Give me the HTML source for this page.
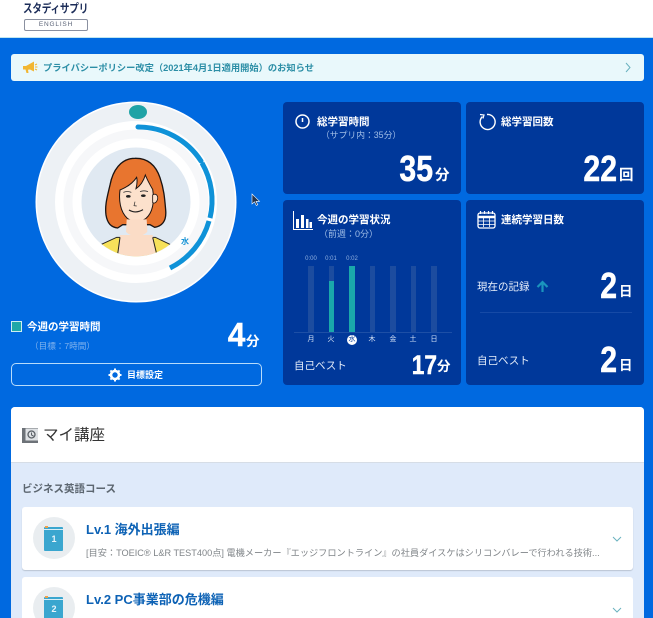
<!DOCTYPE html>
<html lang="ja"><head><meta charset="utf-8"><title>スタディサプリ ENGLISH</title>
<style>
*{margin:0;padding:0;box-sizing:border-box}
html,body{width:653px;height:618px;overflow:hidden;background:#0069e0}
body{font-family:"Liberation Sans","Noto Sans CJK JP",sans-serif;position:relative}
#w{position:absolute;left:0;top:0;width:653px;height:618px;overflow:hidden;filter:blur(.35px)}
.a{position:absolute;white-space:nowrap}
.t{line-height:14px;height:14px}
.b{font-weight:700}
.c{position:absolute;background:#00389a;border-radius:4px}
.n{position:absolute;font-weight:700;color:#fff;white-space:nowrap;transform-origin:100% 100%;transform:scaleX(.84);text-align:right;line-height:1;-webkit-text-stroke:.5px #fff}
.w{color:#fff}
.s{color:#9fbde6}
.bar{position:absolute;top:266px;width:5.5px;height:66px;background:#1c4c9f}
.bf{position:absolute;width:5.5px;background:#1aa8ab;bottom:286px}
.d{position:absolute;top:334px;width:14px;text-align:center;font-size:7px;line-height:12px;color:#d5e2f5}
.v{position:absolute;top:255px;width:20px;text-align:center;font-size:6px;line-height:8px;color:#8fb0e0}
</style></head><body><div id="w">

<div class="a" style="left:0;top:0;width:653px;height:38px;background:#fff;border-bottom:1px solid #bfe6f0"></div>
<div class="a b" style="left:23px;top:3px;font-size:9.6px;line-height:14px;color:#1b2c58;letter-spacing:-.2px;transform:scaleY(1.25);transform-origin:0 50%">スタディサプリ</div>
<div class="a" style="left:24px;top:19px;width:64px;height:12px;border:1px solid #8a90a0;border-radius:2px;text-align:center;font-size:6.5px;line-height:10px;letter-spacing:.8px;color:#5c6478">ENGLISH</div>

<div class="a" style="left:11px;top:54px;width:633px;height:27px;background:#e9f8fb;border-radius:3px"></div>
<svg class="a" style="left:22px;top:60px" width="16" height="14" viewBox="0 0 16 14"><path d="M1 6h3l8-4.500v10L8 9.500 6 9.800 6.500 13H4.500L3.500 9.500H1z" fill="#f2b632"/><path d="M13 5l2-1M13 7h2.500M13 9l2 1" stroke="#f2b632" stroke-width="1"/></svg>
<div class="a b t" id="nt" style="left:43px;top:61px;font-size:9.25px;color:#2b8ea6">プライバシーポリシー改定（2021年4月1日適用開始）のお知らせ</div>
<svg class="a" style="left:624px;top:62px" width="8" height="11" viewBox="0 0 8 11"><path d="M2 1l4 4.500L2 10" fill="none" stroke="#6ab2bf" stroke-width="1"/></svg>

<svg class="a" style="left:30px;top:96px" width="214" height="214" viewBox="0 0 214 214">
<circle cx="106" cy="106" r="100.500" fill="#fff"/>
<circle cx="106" cy="106" r="90" fill="none" stroke="#edf1f5" stroke-width="18"/>
<circle cx="106" cy="106" r="68" fill="none" stroke="#f6f7f9" stroke-width="9"/>
<ellipse cx="108" cy="16" rx="9" ry="7" fill="#1fa3a6"/>
<path d="M108 31A75 75 0 0 1 171 65" fill="none" stroke="#0f92d8" stroke-width="5" stroke-linecap="round"/>
<path d="M172 67A75 75 0 0 1 180 122" fill="none" stroke="#0f92d8" stroke-width="5"/>
<path d="M179 125A75 75 0 0 1 140 172" fill="none" stroke="#0f92d8" stroke-width="5"/>
<circle cx="106" cy="106" r="54.500" fill="#e0e9f2"/>
</svg>
<div class="a" style="left:181px;top:236px;font-size:8px;line-height:12px;color:#1b95d6;font-weight:700">水</div>

<svg class="a" style="left:80px;top:150px" width="115" height="115" viewBox="0 0 345 345">
<defs><clipPath id="fc"><circle cx="168" cy="156" r="163"/></clipPath></defs>
<g clip-path="url(#fc)">
<path d="M62 284L110 262H226L272 284 282 345H52z" fill="#f7e15a" stroke="#222" stroke-width="3"/>
<path d="M112 345L120 255H218L232 345z" fill="#fbdcc6"/>
<path d="M112 320L120 262M232 320L218 262" stroke="#222" stroke-width="3" fill="none"/>
<path d="M165 25C122 25 98 62 90 105 82 140 74 165 78 195 82 220 93 232 113 234L128 224H210L224 232C248 228 260 212 257 180 254 145 252 118 240 83 228 48 205 24 165 25z" fill="#e8752f" stroke="#1c1412" stroke-width="4"/>
<path d="M120 120C116 150 120 185 142 205 156 216 184 216 198 205 218 188 224 155 218 118 206 98 200 85 196 75 190 95 180 108 168 116 172 100 172 90 170 82 158 100 140 112 120 120z" fill="#fce1cc" stroke="#1c1412" stroke-width="3"/>
<path d="M218 135C228 128 236 138 232 150 228 160 222 160 218 158z" fill="#fce1cc" stroke="#1c1412" stroke-width="2.500"/>
<path d="M140 208L138 245C150 262 190 262 202 245L200 208z" fill="#fbdcc6"/>
<path d="M130 127q12-5 24 0M180 125q12-5 24 0" fill="none" stroke="#333" stroke-width="2.500"/>
<ellipse cx="145" cy="139" rx="7" ry="4" fill="#222"/><ellipse cx="190" cy="137" rx="7" ry="4" fill="#222"/>
<path d="M165 155l-3 12 8 1" fill="none" stroke="#222" stroke-width="2"/>
<path d="M147 180q20 12 42-1" fill="none" stroke="#222" stroke-width="3.500"/>
</g></svg>

<svg class="a" style="left:250px;top:193px" width="12" height="14" viewBox="0 0 12 14"><path d="M2 1v10l2.500-2.200 1.800 3.700 1.500-.8-1.800-3.400H9.500z" fill="#23344d" stroke="#fff" stroke-width=".6"/></svg>

<div class="a" style="left:11px;top:321px;width:11px;height:11px;background:#1fa8a8;border:1px solid #cdeef0"></div>
<div class="a b t w" style="left:27px;top:320px;font-size:10.5px">今週の学習時間</div>
<div class="a t" style="left:30px;top:339px;font-size:8.6px;color:#7fb2ee">（目標：7時間）</div>
<div class="n" style="right:408px;top:318px;font-size:33px;transform:scaleX(.95)">4</div>
<div class="a b w" style="left:246px;top:333px;font-size:13.500px;line-height:18px">分</div>

<div class="a" style="left:11px;top:363px;width:251px;height:23px;border:1px solid #b8dcfb;border-radius:5px"></div>
<svg class="a" style="left:108px;top:368px" width="14" height="14" viewBox="0 0 14 14"><circle cx="7" cy="7" r="4" fill="none" stroke="#fff" stroke-width="2.600"/><path d="M7 .5v13M.5 7h13M2.400 2.400l9.200 9.200M11.600 2.400l-9.200 9.200" stroke="#fff" stroke-width="2" stroke-dasharray="2.200 8.600 2.200"/></svg>
<div class="a b t w" style="left:127px;top:368px;font-size:9px">目標設定</div>

<div class="c" style="left:283px;top:102px;width:178px;height:92px"></div>
<div class="c" style="left:466px;top:102px;width:178px;height:92px"></div>
<div class="c" style="left:283px;top:200px;width:178px;height:185px"></div>
<div class="c" style="left:466px;top:200px;width:178px;height:185px"></div>

<svg class="a" style="left:294px;top:113px" width="17" height="17" viewBox="0 0 17 17"><circle cx="8.500" cy="8.500" r="6.500" fill="none" stroke="#fff" stroke-width="1.500"/><path d="M8.500 5v4" stroke="#fff" stroke-width="1.500"/></svg>
<div class="a b t w" style="left:317px;top:115px;font-size:10.5px">総学習時間</div>
<div class="a t s" style="left:321px;top:128px;font-size:8.8px">（サプリ内：35分）</div>
<div class="n" style="right:220px;top:151px;font-size:36px">35</div>
<div class="a b w" style="left:435px;top:166px;font-size:14.500px;line-height:20px">分</div>

<svg class="a" style="left:477px;top:112px" width="19" height="19" viewBox="0 0 19 19"><path d="M5.500 4.500A7.500 7.500 0 1 0 10 2.500" fill="none" stroke="#fff" stroke-width="1.400"/><path d="M3 2.500l4 .5-1 3.500" fill="none" stroke="#fff" stroke-width="1.200"/></svg>
<div class="a b t w" style="left:501px;top:115px;font-size:10.5px">総学習回数</div>
<div class="n" style="right:36px;top:151px;font-size:36px">22</div>
<div class="a b w" style="left:619px;top:166px;font-size:14.500px;line-height:20px">回</div>

<svg class="a" style="left:293px;top:210px" width="20" height="20" viewBox="0 0 20 20"><path d="M.5 1v18.500H20" fill="none" stroke="#fff" stroke-width="1"/><path d="M3 9h3v9H3zM8 5h3v13H8zM13 9h2.500v9H13zM16.500 12H19v6h-2.500z" fill="#fff"/></svg>
<div class="a b t w" style="left:317px;top:213px;font-size:10.5px">今週の学習状況</div>
<div class="a t s" style="left:319px;top:227px;font-size:9px">（前週：0分）</div>

<div class="v" style="left:301px">0:00</div><div class="v" style="left:321px">0:01</div><div class="v" style="left:342px">0:02</div>
<div class="bar" style="left:308px"></div><div class="bar" style="left:328.500px"></div><div class="bar" style="left:349px"></div><div class="bar" style="left:369.500px"></div><div class="bar" style="left:390px"></div><div class="bar" style="left:410.500px"></div><div class="bar" style="left:431px"></div>
<div class="bf" style="left:328.500px;height:51px"></div><div class="bf" style="left:349px;height:66px"></div>
<div class="a" style="left:294px;top:332px;width:158px;height:1px;background:#1d4fa6"></div>
<div class="a" style="left:347px;top:335px;width:10px;height:10px;border-radius:50%;background:#fff"></div>
<div class="d" style="left:304px">月</div><div class="d" style="left:324px">火</div><div class="d" style="left:345px;color:#00389a">水</div><div class="d" style="left:365px">木</div><div class="d" style="left:386px">金</div><div class="d" style="left:406px">土</div><div class="d" style="left:427px">日</div>

<div class="a t w" style="left:294px;top:359px;font-size:10.5px;color:#e6eefa">自己ベスト</div>
<div class="n" style="right:216px;top:352px;font-size:27px">17</div>
<div class="a b w" style="left:437px;top:358px;font-size:13.500px;line-height:18px">分</div>

<svg class="a" style="left:477px;top:210px" width="19" height="19" viewBox="0 0 19 19"><rect x="1" y="3" width="17" height="15" rx="2" fill="none" stroke="#fff" stroke-width="1.300"/><path d="M1 7h17" stroke="#fff" stroke-width="2.400"/><path d="M1 11h17M1 14.500h17M6.500 8v9M12.500 8v9" stroke="#fff" stroke-width=".8"/><path d="M3.500 1v3M7.500 1v3M11.500 1v3M15.500 1v3" stroke="#fff" stroke-width="1.200"/></svg>
<div class="a b t w" style="left:501px;top:213px;font-size:10.5px">連続学習日数</div>
<div class="a t" style="left:477px;top:280px;font-size:10.5px;color:#e6eefa">現在の記録</div>
<svg class="a" style="left:536px;top:280px" width="13" height="13" viewBox="0 0 13 13"><path d="M6.500 12V2M1.500 7l5-5 5 5" fill="none" stroke="#1a94bd" stroke-width="2.200"/></svg>
<div class="n" style="right:36px;top:268px;font-size:36px">2</div>
<div class="a b w" style="left:619px;top:283px;font-size:13.500px;line-height:18px">日</div>
<div class="a" style="left:480px;top:312px;width:152px;height:1px;background:#164aa6"></div>
<div class="a t" style="left:477px;top:354px;font-size:10.5px;color:#e6eefa">自己ベスト</div>
<div class="n" style="right:36px;top:342px;font-size:36px">2</div>
<div class="a b w" style="left:619px;top:357px;font-size:13.500px;line-height:18px">日</div>

<div class="a" style="left:11px;top:407px;width:633px;height:211px;background:#dfeafa;border-radius:4px 4px 0 0;overflow:hidden"><div style="height:56px;background:#fff;border-bottom:1px solid #d6dde6"></div></div>
<svg class="a" style="left:22px;top:427px" width="17" height="18" viewBox="0 0 17 18"><rect x="0" y="1" width="16" height="15" fill="#6d7278"/><rect x="3.500" y="1.500" width="12.500" height="12" fill="#dfe2e5"/><circle cx="9.500" cy="7.500" r="3.500" fill="none" stroke="#5a6066" stroke-width="1.300"/><path d="M9.500 5.500v2.500l2 1" stroke="#5a6066" stroke-width="1" fill="none"/></svg>
<div class="a" style="left:43px;top:425px;font-size:15.500px;line-height:22px;color:#333">マイ講座</div>
<div class="a b t" style="left:22px;top:482px;font-size:10.5px;color:#5c6670">ビジネス英語コース</div>

<div class="a" style="left:22px;top:507px;width:611px;height:63px;background:#fff;border-radius:3px;box-shadow:0 1px 1px #b9c3d2"></div>
<div class="a" style="left:22px;top:577px;width:611px;height:60px;background:#fff;border-radius:3px"></div>

<svg class="a" style="left:33px;top:517px" width="42" height="42" viewBox="0 0 42 42"><circle cx="21" cy="21" r="21" fill="#e9edf0"/><rect x="11" y="10" width="19" height="24" rx="1" fill="#3aa6cf"/><rect x="11" y="12" width="19" height="1" fill="#d8eef6"/><rect x="12" y="9" width="3" height="2" fill="#eda24a"/></svg>
<div class="a b" style="left:51.500px;top:532px;font-size:9px;line-height:14px;color:#e9f5fa">1</div>
<svg class="a" style="left:33px;top:587px" width="42" height="42" viewBox="0 0 42 42"><circle cx="21" cy="21" r="21" fill="#e9edf0"/><rect x="11" y="10" width="19" height="24" rx="1" fill="#3aa6cf"/><rect x="11" y="12" width="19" height="1" fill="#d8eef6"/><rect x="12" y="9" width="3" height="2" fill="#eda24a"/></svg>
<div class="a b" style="left:51.500px;top:602px;font-size:9px;line-height:14px;color:#e9f5fa">2</div>

<div class="a b" style="left:86px;top:521px;font-size:13px;line-height:18px;color:#0d62b5">Lv.1 海外出張編</div>
<div class="a b" style="left:86px;top:591px;font-size:13px;line-height:18px;color:#0d62b5">Lv.2 PC事業部の危機編</div>
<div class="a t" style="left:86px;top:546px;font-size:9.18px;color:#808589">[目安：TOEIC® L&amp;R TEST400点] 電機メーカー『エッジフロントライン』の社員ダイスケはシリコンバレーで行われる技術...</div>
<svg class="a" style="left:612px;top:536px" width="10" height="7" viewBox="0 0 10 7"><path d="M1 1l4 4 4-4" fill="none" stroke="#6ab2bf" stroke-width="1"/></svg>
<svg class="a" style="left:612px;top:607px" width="10" height="7" viewBox="0 0 10 7"><path d="M1 1l4 4 4-4" fill="none" stroke="#6ab2bf" stroke-width="1"/></svg>
</div></body></html>
